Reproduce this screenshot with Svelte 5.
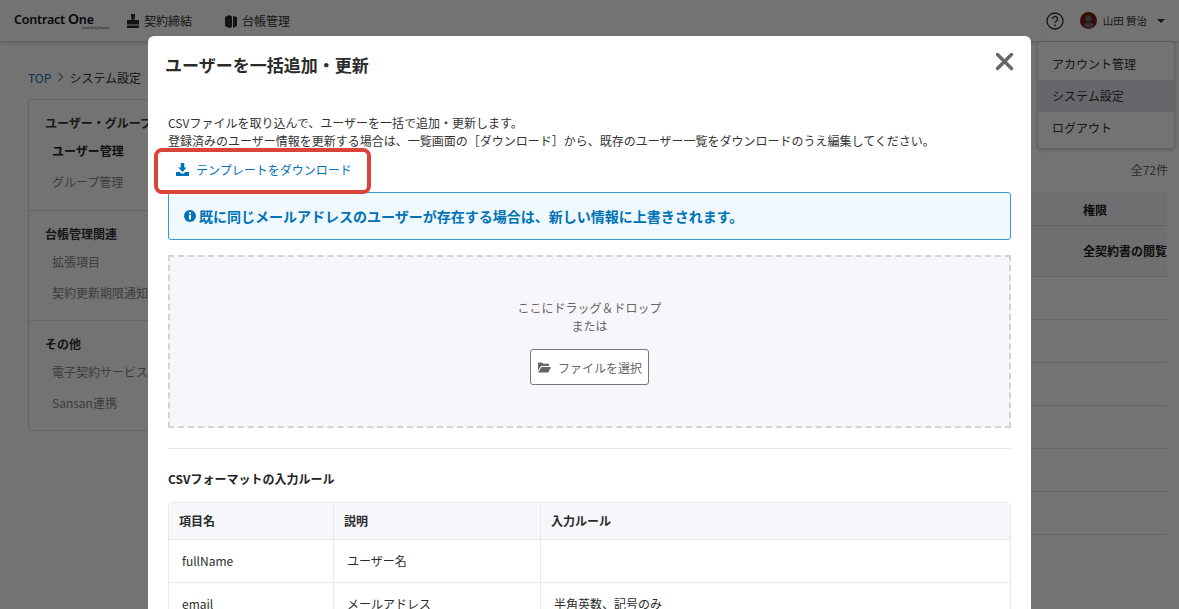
<script>
  const sideGroups = [
    { title: 'ユーザー・グループ管理', items: [{ label: 'ユーザー管理', active: true }, { label: 'グループ管理' }] },
    { title: '台帳管理関連', items: [{ label: '拡張項目' }, { label: '契約更新期限通知設定' }] },
    { title: 'その他', items: [{ label: '電子契約サービス連携' }, { label: 'Sansan連携' }] }
  ];
  const rules = [
    { name: 'fullName', desc: 'ユーザー名', rule: '' },
    { name: 'email', desc: 'メールアドレス', rule: '半角英数、記号のみ' }
  ];
</script>

<div class="page">
  <header class="topbar">
    <div class="logo">
      <span class="logo-word">Contract <b>O</b>ne</span>
      <span class="logo-sub">powered by Sansan</span>
    </div>
    <nav class="nav">
      <span class="nav-item">
        <svg width="14" height="14" viewBox="0 0 14 14"><path d="M5 0h4v2.500L8.400 6H13v4.500H1V6h4.600L5 2.500zM1 11.500h12V14H1z" fill="#2e2e2e"/></svg>
        契約締結
      </span>
      <span class="nav-item">
        <svg width="14" height="14" viewBox="0 0 14 14"><path d="M1 3l4-2 3 1.500V13l-3 1-4-2zM9 2l4 1v9l-4 2z" fill="#2e2e2e"/></svg>
        台帳管理
      </span>
    </nav>
    <div class="top-right">
      <svg class="help" width="18" height="18" viewBox="0 0 18 18">
        <circle cx="9" cy="9" r="8" fill="none" stroke="#2b2b2b" stroke-width="1.300"/>
        <path d="M6.500 7a2.500 2.500 0 1 1 3.700 2.200c-.8.500-1.200.9-1.200 1.800" fill="none" stroke="#2b2b2b" stroke-width="1.300"/>
        <circle cx="9" cy="13.300" r=".9" fill="#2b2b2b"/>
      </svg>
      <span class="user">
        <svg width="17" height="17" viewBox="0 0 17 17">
          <circle cx="8.500" cy="8.500" r="8.500" fill="#7a1d14"/>
          <circle cx="8.500" cy="6.500" r="3.100" fill="#6f6f70"/>
          <path d="M3.200 13.500c.8-2.200 2.800-3 5.300-3s4.500.8 5.300 3a7 7 0 0 1-10.600 0z" fill="#6f6f70"/>
        </svg>
        <span class="user-name">山田 贊治</span>
        <i class="caret"></i>
      </span>
    </div>
  </header>

  <div class="content">
    <aside class="left">
      <div class="crumbs"><a href="#top">TOP</a><i class="chev"></i><span>システム設定</span></div>
      <div class="side">
        {#each sideGroups as g}
          <section class="side-group">
            <h3>{g.title}</h3>
            {#each g.items as it}
              <p class:active={it.active}>{it.label}</p>
            {/each}
          </section>
        {/each}
      </div>
    </aside>
    <div class="right">
      <div class="count">全72件</div>
      <div class="bg-table">
        <div class="bg-row bg-head"><span>権限</span></div>
        <div class="bg-row bg-first"><span>全契約書の閲覧</span></div>
        {#each Array(6) as _}
          <div class="bg-row"></div>
        {/each}
      </div>
    </div>
  </div>

  <div class="menu">
    <div class="menu-item">アカウント管理</div>
    <div class="menu-item current">システム設定</div>
    <div class="menu-item">ログアウト</div>
  </div>

  <div class="overlay"></div>

  <div class="modal">
    <div class="modal-head">
      <h2>ユーザーを一括追加・更新</h2>
      <svg class="close" width="19" height="19" viewBox="0 0 19 19"><path d="M2.500 2.500l14 14M16.500 2.500l-14 14" stroke="#666" stroke-width="3.400" stroke-linecap="round"/></svg>
    </div>
    <div class="modal-body">
      <p class="lead">CSVファイルを取り込んで、ユーザーを一括で追加・更新します。<br />登録済みのユーザー情報を更新する場合は、一覧画面の［ダウンロード］から、既存のユーザー一覧をダウンロードのうえ編集してください。</p>
      <a class="tpl" href="#tpl">
        <svg width="13" height="13" viewBox="0 0 13 13"><path d="M4.700 0h3.600v4.600h2.400L6.500 8.900 2.300 4.600h2.400zM0 9h3.700l1.700 1.400h2.200L9.300 9H13v4H0z" fill="#0073b6"/></svg>
        テンプレートをダウンロード
      </a>
      <div class="notice">
        <svg width="12" height="12" viewBox="0 0 12 12"><circle cx="6" cy="6" r="6" fill="#0073b6"/><rect x="5" y="5" width="2" height="4.500" fill="#fff"/><rect x="5" y="2.300" width="2" height="1.800" fill="#fff"/></svg>
        既に同じメールアドレスのユーザーが存在する場合は、新しい情報に上書きされます。
      </div>
      <div class="drop">
        <p>ここにドラッグ＆ドロップ</p>
        <p>または</p>
        <button class="pick">
          <svg width="13" height="11" viewBox="0 0 13 11"><path d="M0 1.500A1 1 0 0 1 1 .5h3l1.200 1.300H10a1 1 0 0 1 1 1V4H3L0 8.500zM3.500 5H13l-2.600 5.500H0z" fill="#666"/></svg>
          ファイルを選択
        </button>
      </div>
      <hr />
      <h4>CSVフォーマットの入力ルール</h4>
      <div class="rules">
        <div class="rule-row rule-head"><span>項目名</span><span>説明</span><span>入力ルール</span></div>
        {#each rules as r}
          <div class="rule-row"><span>{r.name}</span><span>{r.desc}</span><span>{r.rule}</span></div>
        {/each}
      </div>
    </div>
    <div class="callout"></div>
  </div>
</div>

<style>
  :global(body) {
    margin: 0;
    background: #fff;
  }
  .page {
    position: relative;
    width: 1179px;
    height: 609px;
    overflow: hidden;
    font-family: "Noto Sans CJK JP", "Noto Sans", sans-serif;
    font-size: 12px;
    color: #333;
    background: #fff;
  }
  .topbar {
    display: flex;
    align-items: center;
    height: 41px;
    padding: 0 14px;
    box-sizing: border-box;
    box-shadow: 0 1px 4px rgba(0, 0, 0, 0.25);
  }
  .logo {
    display: flex;
    flex-direction: column;
    width: 112px;
    font-family: "Noto Sans", sans-serif;
  }
  .logo-word {
    font-size: 12.500px;
    font-weight: 600;
    line-height: 14px;
    letter-spacing: -0.2px;
    color: #111;
  }
  .logo-word b {
    font-size: 14px;
    font-weight: 600;
  }
  .logo-sub {
    font-size: 3px;
    line-height: 3px;
    text-align: right;
    padding-right: 17px;
    color: #333;
  }
  .nav {
    display: flex;
    gap: 32px;
  }
  .nav-item {
    display: flex;
    align-items: center;
    gap: 4px;
  }
  .top-right {
    display: flex;
    align-items: center;
    margin-left: auto;
    gap: 16px;
    padding-right: -1px;
  }
  .help {
    display: block;
  }
  .user {
    display: flex;
    align-items: center;
    gap: 6px;
    font-size: 10.500px;
  }
  .caret {
    width: 0;
    height: 0;
    margin-left: 4px;
    border: 4px solid transparent;
    border-top-color: #333;
    border-bottom: 0;
  }
  .content {
    display: flex;
  }
  .left {
    width: 361px;
    padding: 28px 0 0 28px;
    box-sizing: border-box;
  }
  .crumbs {
    display: flex;
    align-items: center;
    gap: 5px;
    height: 16px;
  }
  .crumbs a {
    color: #1f6fa8;
    text-decoration: none;
  }
  .chev {
    width: 5px;
    height: 5px;
    margin-right: 2px;
    border-top: 1px solid #777;
    border-right: 1px solid #777;
    transform: rotate(45deg);
  }
  .side {
    width: 300px;
    margin-top: 14px;
    border: 1px solid #ddd;
    border-radius: 3px;
  }
  .side-group {
    padding: 8px 16px 10px;
    border-top: 1px solid #ddd;
    height: 110px;
    box-sizing: border-box;
  }
  .side-group:first-child {
    border-top: 0;
  }
  .side-group h3 {
    margin: 3px 0 0;
    font-size: 12px;
    font-weight: 700;
    line-height: 24px;
    color: #333;
  }
  .side-group p {
    margin: 0 0 0 7px;
    line-height: 31px;
    color: #888;
  }
  .side-group p.active {
    font-weight: 700;
    color: #222;
  }
  .right {
    flex: 1;
    padding: 120px 29px 0 0;
  }
  .count {
    text-align: right;
    margin-right: -1px;
    line-height: 18px;
    color: #666;
  }
  .bg-table {
    margin-top: 14px;
    margin-left: 300px;
  }
  .bg-row {
    height: 42px;
    border-bottom: 1px solid #ddd;
    padding-left: 453px;
    white-space: nowrap;
    overflow: hidden;
    font-weight: 700;
    line-height: 33px;
    color: #222;
  }
  .bg-head {
    height: 32px;
    background: #f5f5fa;
  }
  .bg-first {
    height: 50px;
    line-height: 50px;
    background: #f5f5fa;
  }
  .menu {
    position: absolute;
    top: 42px;
    left: 1038px;
    width: 136px;
    padding: 6px 0 4px;
    background: #fff;
    border-radius: 3px;
    box-shadow: 0 1px 4px rgba(0, 0, 0, 0.3);
  }
  .menu-item {
    height: 32px;
    padding-left: 14px;
    line-height: 32px;
  }
  .menu-item.current {
    background: #e4e4ee;
  }
  .overlay {
    position: absolute;
    inset: 0;
    background: rgba(0, 0, 0, 0.55);
  }
  .modal {
    position: absolute;
    top: 36px;
    left: 148px;
    width: 883px;
    height: 700px;
    box-sizing: border-box;
    background: #fff;
    border-radius: 6px;
    color: #2b2b2b;
  }
  .modal-head {
    display: flex;
    justify-content: space-between;
    padding: 16px 17px 0;
  }
  .modal-head h2 {
    margin: 0;
    font-size: 17px;
    font-weight: 700;
    line-height: 25px;
  }
  .close {
    margin-top: 0;
  }
  .modal-body {
    padding: 37px 20px 0 20px;
  }
  .lead {
    margin: 0;
    font-size: 12px;
    line-height: 18px;
    color: #333;
  }
  .tpl {
    display: flex;
    align-items: center;
    gap: 7px;
    height: 25px;
    margin: 7px 0 10px 8px;
    color: #0073b6;
    text-decoration: none;
  }
  .notice {
    display: flex;
    align-items: center;
    gap: 3px;
    height: 48px;
    padding-left: 15px;
    box-sizing: border-box;
    background: #eff8fd;
    border: 1px solid #3a9bd0;
    border-radius: 3px;
    color: #0073b6;
    font-size: 14px;
    font-weight: 700;
  }
  .drop {
    margin-top: 15px;
    height: 173px;
    box-sizing: border-box;
    padding-top: 42px;
    background: #f6f6fb;
    border: 2px dashed #d4d4d8;
    text-align: center;
    color: #666;
  }
  .drop p {
    margin: 0;
    line-height: 18px;
  }
  .pick {
    display: inline-flex;
    align-items: center;
    gap: 7px;
    height: 36px;
    margin-top: 14px;
    padding: 0 6px 0 7px;
    background: #fff;
    border: 1px solid #777;
    border-radius: 3px;
    font: inherit;
    color: #666;
  }
  hr {
    margin: 20px 0 0;
    border: 0;
    border-top: 1px solid #e6e6e6;
  }
  h4 {
    margin: 21px 0 0;
    font-size: 12px;
    font-weight: 700;
    line-height: 18px;
    color: #222;
  }
  .rules {
    margin-top: 14px;
    border: 1px solid #e8e8ee;
    border-radius: 4px;
  }
  .rule-row {
    display: grid;
    grid-template-columns: 164px 207px 1fr;
    height: 42px;
    border-top: 1px solid #e8e8ee;
    align-items: center;
  }
  .rule-row span {
    padding-left: 13px;
    height: 100%;
    line-height: 41px;
    border-left: 1px solid #e8e8ee;
    box-sizing: border-box;
  }
  .rule-row span:first-child {
    border-left: 0;
  }
  .rule-head {
    height: 36px;
    border-top: 0;
    background: #f6f6fb;
    font-weight: 700;
  }
  .rule-head span {
    padding-left: 10px;
    line-height: 35px;
  }
  .callout {
    position: absolute;
    top: 112px;
    left: 6px;
    width: 217px;
    height: 46px;
    box-sizing: border-box;
    border: 4px solid #d9433a;
    border-radius: 8px;
  }
</style>
